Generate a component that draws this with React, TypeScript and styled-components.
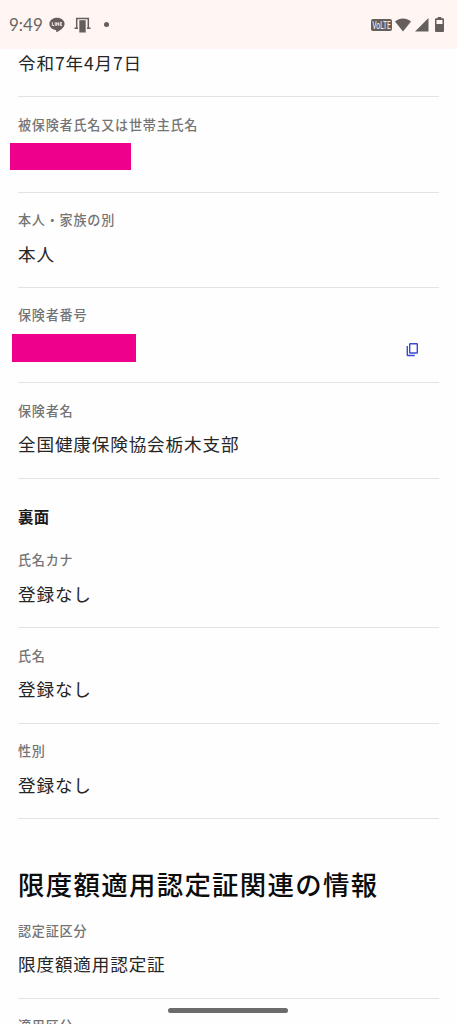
import React from 'react';
import styled, { createGlobalStyle } from 'styled-components';

const GlobalStyle = createGlobalStyle`
  * { box-sizing: border-box; }
  html, body { margin: 0; padding: 0; background: #fefefe; }
  body { font-family: 'Noto Sans CJK JP', sans-serif; overflow: hidden; }
`;

const Screen = styled.div`
  display: flex;
  flex-direction: column;
  position: relative;
  width: 100%;
  height: 1024px;
  overflow: hidden;
  background: #fefefe;
`;

const StatusBar = styled.header`
  display: flex;
  flex: none;
  align-items: center;
  justify-content: space-between;
  height: 49px;
  padding: 0 13px 0 9px;
  background: #fff6f3;
  color: #6b6664;
`;

const StatusGroup = styled.div`
  display: flex;
  align-items: center;
  height: 18px;

  svg { display: block; flex: none; }
`;

const Clock = styled.span`
  width: 40px;
  font: 400 17px/18px Lato, sans-serif;
  white-space: nowrap;
`;

const Content = styled.main`
  display: flex;
  flex: 1;
  min-height: 0;
  flex-direction: column;
  padding: 0 18px;
  overflow: hidden;
`;

const Field = styled.section<{ $first?: boolean }>`
  flex: none;
  height: ${p => (p.$first ? '48.3px' : '95.35px')};
  padding-top: ${p => (p.$first ? '1px' : '16.3px')};
  border-bottom: 1px solid #e3e3e3;
`;

const Label = styled.div`
  margin-bottom: 9.8px;
  font-size: 13.1px;
  font-weight: 500;
  line-height: 22px;
  letter-spacing: 0.77px;
  color: #747474;
  white-space: nowrap;
`;

const ValueRow = styled.div`
  display: flex;
  align-items: center;
  justify-content: space-between;
  height: 26px;
  padding-right: 20px;
`;

const Value = styled.span`
  font-size: 17.6px;
  line-height: 26px;
  letter-spacing: 0.85px;
  color: #262626;
  white-space: nowrap;
`;

const Redaction = styled.span<{ $w: number; $h: number; $left: number; $top: number }>`
  flex: none;
  align-self: flex-start;
  width: ${p => p.$w}px;
  height: ${p => p.$h}px;
  margin: ${p => p.$top}px 0 0 ${p => p.$left}px;
  background: #ee008c;
`;

const CopyButton = styled.button`
  display: flex;
  padding: 0;
  border: 0;
  background: none;
  color: #3a49d6;
`;

const SideHeading = styled.h3`
  flex: none;
  height: 54.3px;
  margin: 0;
  padding-top: 25px;
  font-size: 15.4px;
  font-weight: 700;
  line-height: 24px;
  letter-spacing: 0.4px;
  color: #1a1a1a;
`;

const SectionHeading = styled.h2`
  flex: none;
  height: 84.3px;
  margin: 0;
  padding-top: 45px;
  font-size: 26.4px;
  font-weight: 500;
  line-height: 40px;
  letter-spacing: 1.34px;
  color: #0c0c0c;
  white-space: nowrap;
`;

const HomeHandle = styled.div`
  position: absolute;
  bottom: 11px;
  left: 168px;
  width: 120px;
  height: 5px;
  border-radius: 3px;
  background: #6b6b6b;
`;

const ChatIcon = () => (
  <svg width="16" height="16" viewBox="0 0 16 16">
    <path fill="#645f5d" d="M8 .8C3.800.8.4 3.500.4 6.900c0 3 2.700 5.500 6.300 6 .9.2.6.9.5 1.800 0 .5.3.7.8.4 2.500-1.400 7.600-4.500 7.600-8.200C15.600 3.500 12.200.8 8 .8Z" />
    <path fill="none" stroke="#fff6f3" strokeWidth=".9" d="M3.300 5.200v3.300H5M6.200 5.200v3.700M7.700 8.900V5.500l2 3V5.200M13 5.600h-1.700v2.900H13M11.300 7H13" />
  </svg>
);

const GateIcon = () => (
  <svg width="17" height="16" viewBox="0 0 17 16">
    <path fill="none" stroke="#645f5d" strokeWidth="1.500" d="M.5 11.200H4M13 11.200h3.500M2.700 11V1.500h11.600V11" />
    <path fill="#645f5d" d="M5.300 3.200h6.400v12.300H5.300Z" />
  </svg>
);

const NetworkBadge = () => (
  <svg width="21" height="12" viewBox="0 0 21 12">
    <rect width="21" height="12" rx="2" fill="#645f5d" />
    <text x="1.200" y="9.700" textLength="18.600" lengthAdjust="spacingAndGlyphs" fontFamily="Roboto, sans-serif" fontWeight="400" fontSize="10.500" fill="#fff6f3">VoLTE</text>
  </svg>
);

const WifiIcon = () => (
  <svg width="16" height="14" viewBox="0 0 16 14">
    <path fill="#645f5d" d="M0 3.500C4.500-.6 11.500-.6 16 3.500L8 13.600Z" />
  </svg>
);

const SignalIcon = () => (
  <svg width="14" height="14" viewBox="0 0 14 14">
    <path fill="#645f5d" d="M13.500 0v13.500H0Z" />
  </svg>
);

const BatteryIcon = () => (
  <svg width="9" height="15" viewBox="0 0 9 15">
    <path fill="#645f5d" fillRule="evenodd" d="M2.700 0h3.600v1.300H8q1 0 1 1V14q0 1-1 1H1q-1 0-1-1V2.300q0-1 1-1h1.700ZM1.500 3v4h6V3Z" />
  </svg>
);

const CopyIcon = () => (
  <svg width="13" height="15" viewBox="0 0 13 15" fill="none" stroke="currentColor" strokeWidth="1.400">
    <rect x="3.700" y="1.700" width="7.600" height="9.300" rx=".5" />
    <path d="M1.300 4v9q0 .5.5.5H8.700" />
  </svg>
);

const Gap = styled.span<{ $w: number }>`
  flex: none;
  width: ${p => p.$w}px;
`;

const Dot = styled.span`
  width: 5px;
  height: 5px;
  border-radius: 50%;
  background: #645f5d;
`;

type ItemProps = { label: string; children: React.ReactNode };

const Item = ({ label, children }: ItemProps) => (
  <Field>
    <Label>{label}</Label>
    <ValueRow>{children}</ValueRow>
  </Field>
);

export default function App() {
  return (
    <Screen>
      <GlobalStyle />
      <StatusBar>
        <StatusGroup>
          <Clock>9:49</Clock>
          <ChatIcon />
          <Gap $w={9} />
          <GateIcon />
          <Gap $w={13} />
          <Dot />
        </StatusGroup>
        <StatusGroup>
          <NetworkBadge />
          <Gap $w={3} />
          <WifiIcon />
          <Gap $w={4} />
          <SignalIcon />
          <Gap $w={6} />
          <BatteryIcon />
        </StatusGroup>
      </StatusBar>
      <Content>
        <Field $first>
          <ValueRow><Value>令和7年4月7日</Value></ValueRow>
        </Field>
        <Item label="被保険者氏名又は世帯主氏名">
          <Redaction $w={121} $h={27} $left={-8} $top={-2} />
        </Item>
        <Item label="本人・家族の別"><Value>本人</Value></Item>
        <Item label="保険者番号">
          <Redaction $w={124} $h={28} $left={-6} $top={-2} />
          <CopyButton aria-label="コピー"><CopyIcon /></CopyButton>
        </Item>
        <Item label="保険者名"><Value>全国健康保険協会栃木支部</Value></Item>
        <SideHeading>裏面</SideHeading>
        <Item label="氏名カナ"><Value>登録なし</Value></Item>
        <Item label="氏名"><Value>登録なし</Value></Item>
        <Item label="性別"><Value>登録なし</Value></Item>
        <SectionHeading>限度額適用認定証関連の情報</SectionHeading>
        <Item label="認定証区分"><Value>限度額適用認定証</Value></Item>
        <Item label="適用区分"><Value>登録なし</Value></Item>
      </Content>
      <HomeHandle />
    </Screen>
  );
}
